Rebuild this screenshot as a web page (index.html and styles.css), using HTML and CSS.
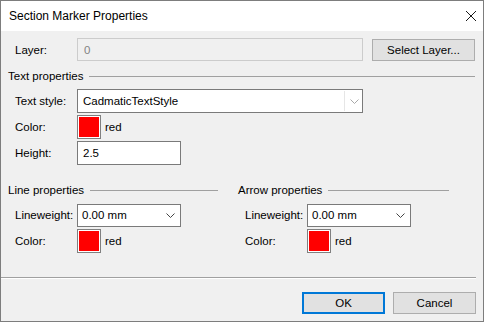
FILE: index.html
```html
<!DOCTYPE html>
<html lang="en">
<head>
    <meta charset="UTF-8">
    <title>Section Marker Properties</title>
    <link rel="stylesheet" href="styles.css">
</head>
<body>
    <div class="window">
        <div class="titlebar">
            <span class="title">Section Marker Properties</span>
            <svg class="close" width="12" height="12" viewBox="0 0 12 12">
                <path d="M1 1 L11 11 M11 1 L1 11" stroke="#1a1a1a" stroke-width="1" fill="none"/>
            </svg>
        </div>
        <div class="content">
            <div class="row layer-row">
                <span class="label">Layer:</span>
                <div class="field disabled wide">0</div>
                <button class="btn select-layer">Select Layer...</button>
            </div>

            <div class="group-title text-group">Text properties</div>
            <div class="rows">
                <div class="row">
                    <span class="label">Text style:</span>
                    <div class="field combo wide">
                        <span>CadmaticTextStyle</span>
                        <span class="combo-sep"></span>
                        <svg class="chev" width="9" height="5" viewBox="0 0 9 5"><path d="M0.5 0.5 L4.5 4.5 L8.5 0.5" stroke="#a8a8a8" fill="none"/></svg>
                    </div>
                </div>
                <div class="row">
                    <span class="label">Color:</span>
                    <div class="swatch"></div>
                    <span class="swatch-name">red</span>
                </div>
                <div class="row">
                    <span class="label">Height:</span>
                    <div class="field small">2.5</div>
                </div>
            </div>

            <div class="columns">
                <div class="col col-line">
                    <div class="group-title">Line properties</div>
                    <div class="rows">
                        <div class="row">
                            <span class="label">Lineweight:</span>
                            <div class="field small dropdown">
                                <span>0.00 mm</span>
                                <svg class="chev" width="9" height="5" viewBox="0 0 9 5"><path d="M0.5 0.5 L4.5 4.5 L8.5 0.5" stroke="#444" fill="none"/></svg>
                            </div>
                        </div>
                        <div class="row">
                            <span class="label">Color:</span>
                            <div class="swatch"></div>
                            <span class="swatch-name">red</span>
                        </div>
                    </div>
                </div>
                <div class="col col-arrow">
                    <div class="group-title">Arrow properties</div>
                    <div class="rows">
                        <div class="row">
                            <span class="label">Lineweight:</span>
                            <div class="field small dropdown">
                                <span>0.00 mm</span>
                                <svg class="chev" width="9" height="5" viewBox="0 0 9 5"><path d="M0.5 0.5 L4.5 4.5 L8.5 0.5" stroke="#444" fill="none"/></svg>
                            </div>
                        </div>
                        <div class="row">
                            <span class="label">Color:</span>
                            <div class="swatch"></div>
                            <span class="swatch-name">red</span>
                        </div>
                    </div>
                </div>
            </div>
        </div>
        <div class="footer">
            <button class="btn ok">OK</button>
            <button class="btn">Cancel</button>
        </div>
    </div>
</body>
</html>
```

FILE: styles.css
```css
*{
    box-sizing: border-box;
}
body{
    margin: 0;
    font-family: "Liberation Sans", Arial, sans-serif;
    font-size: 11.5px;
    color: #000;
    background: #6b6b6b;
}
.window{
    width: 484px;
    height: 322px;
    border: 1px solid #7d7d7d;
    background-color: #f0f0f0;
    display: flex;
    flex-direction: column;
}
.titlebar{
    height: 30px;
    background-color: #fff;
    display: flex;
    align-items: center;
    justify-content: space-between;
    padding: 0 6px 0 8px;
    flex-shrink: 0;
}
.title{
    font-size: 12px;
    color: #000;
}
.content{
    flex: 1;
    padding: 7px 7px 0 7px;
}
.row{
    display: flex;
    align-items: center;
    height: 24px;
}
.rows{
    display: flex;
    flex-direction: column;
    gap: 2px;
    padding-left: 7px;
}
.label{
    width: 62px;
    flex-shrink: 0;
}
.layer-row{
    padding-left: 7px;
    height: 23px;
}
.field{
    height: 24px;
    border: 1px solid #7a7a7a;
    background: #fff;
    display: flex;
    align-items: center;
    padding-left: 5px;
}
.field.wide{
    width: 286px;
}
.field.small{
    width: 104px;
}
.field.disabled{
    height: 23px;
    background: #f0f0f0;
    border-color: #cccccc;
    color: #838383;
    padding-left: 6px;
}
.combo span:first-child, .dropdown span:first-child{
    flex: 1;
}
.combo-sep{
    width: 1px;
    height: 20px;
    background: #e6e6e6;
    margin-right: 5px;
}
.combo .chev{
    margin-right: 3px;
}
.dropdown{
    height: 23px;
    padding-left: 4px;
}
.dropdown .chev{
    margin-right: 5px;
}
.btn{
    font-family: "Liberation Sans", Arial, sans-serif;
    font-size: 11.5px;
    color: #000;
    background: #e1e1e1;
    border: 1px solid #adadad;
    height: 22px;
    padding: 0;
}
.select-layer{
    width: 103px;
    margin-left: 9px;
}
.group-title{
    display: flex;
    align-items: center;
    gap: 6px;
    height: 16px;
    margin: 7px 0 5px 0;
}
.group-title::after{
    content: "";
    flex: 1;
    border-top: 1px solid #a0a0a0;
}
.text-group{
    margin-right: 1px;
}
.swatch{
    width: 24px;
    height: 24px;
    border: 1px solid #808080;
    background: #ff0000;
    box-shadow: inset 0 0 0 1px #fff;
}
.swatch-name{
    margin-left: 4px;
}
.columns{
    display: flex;
    gap: 20px;
    margin-top: 17px;
}
.col-line{
    width: 210px;
}
.col-arrow{
    width: 211px;
}
.columns .group-title{
    margin-top: 0;
}
.footer{
    height: 44px;
    border-top: 1px solid #a0a0a0;
    box-shadow: inset 0 1px 0 #fff;
    margin-right: 7px;
    display: flex;
    justify-content: flex-end;
    align-items: flex-start;
    gap: 8px;
    padding-top: 14px;
    flex-shrink: 0;
}
.footer .btn{
    width: 83px;
}
.ok{
    border: 2px solid #0078d7;
}
```
